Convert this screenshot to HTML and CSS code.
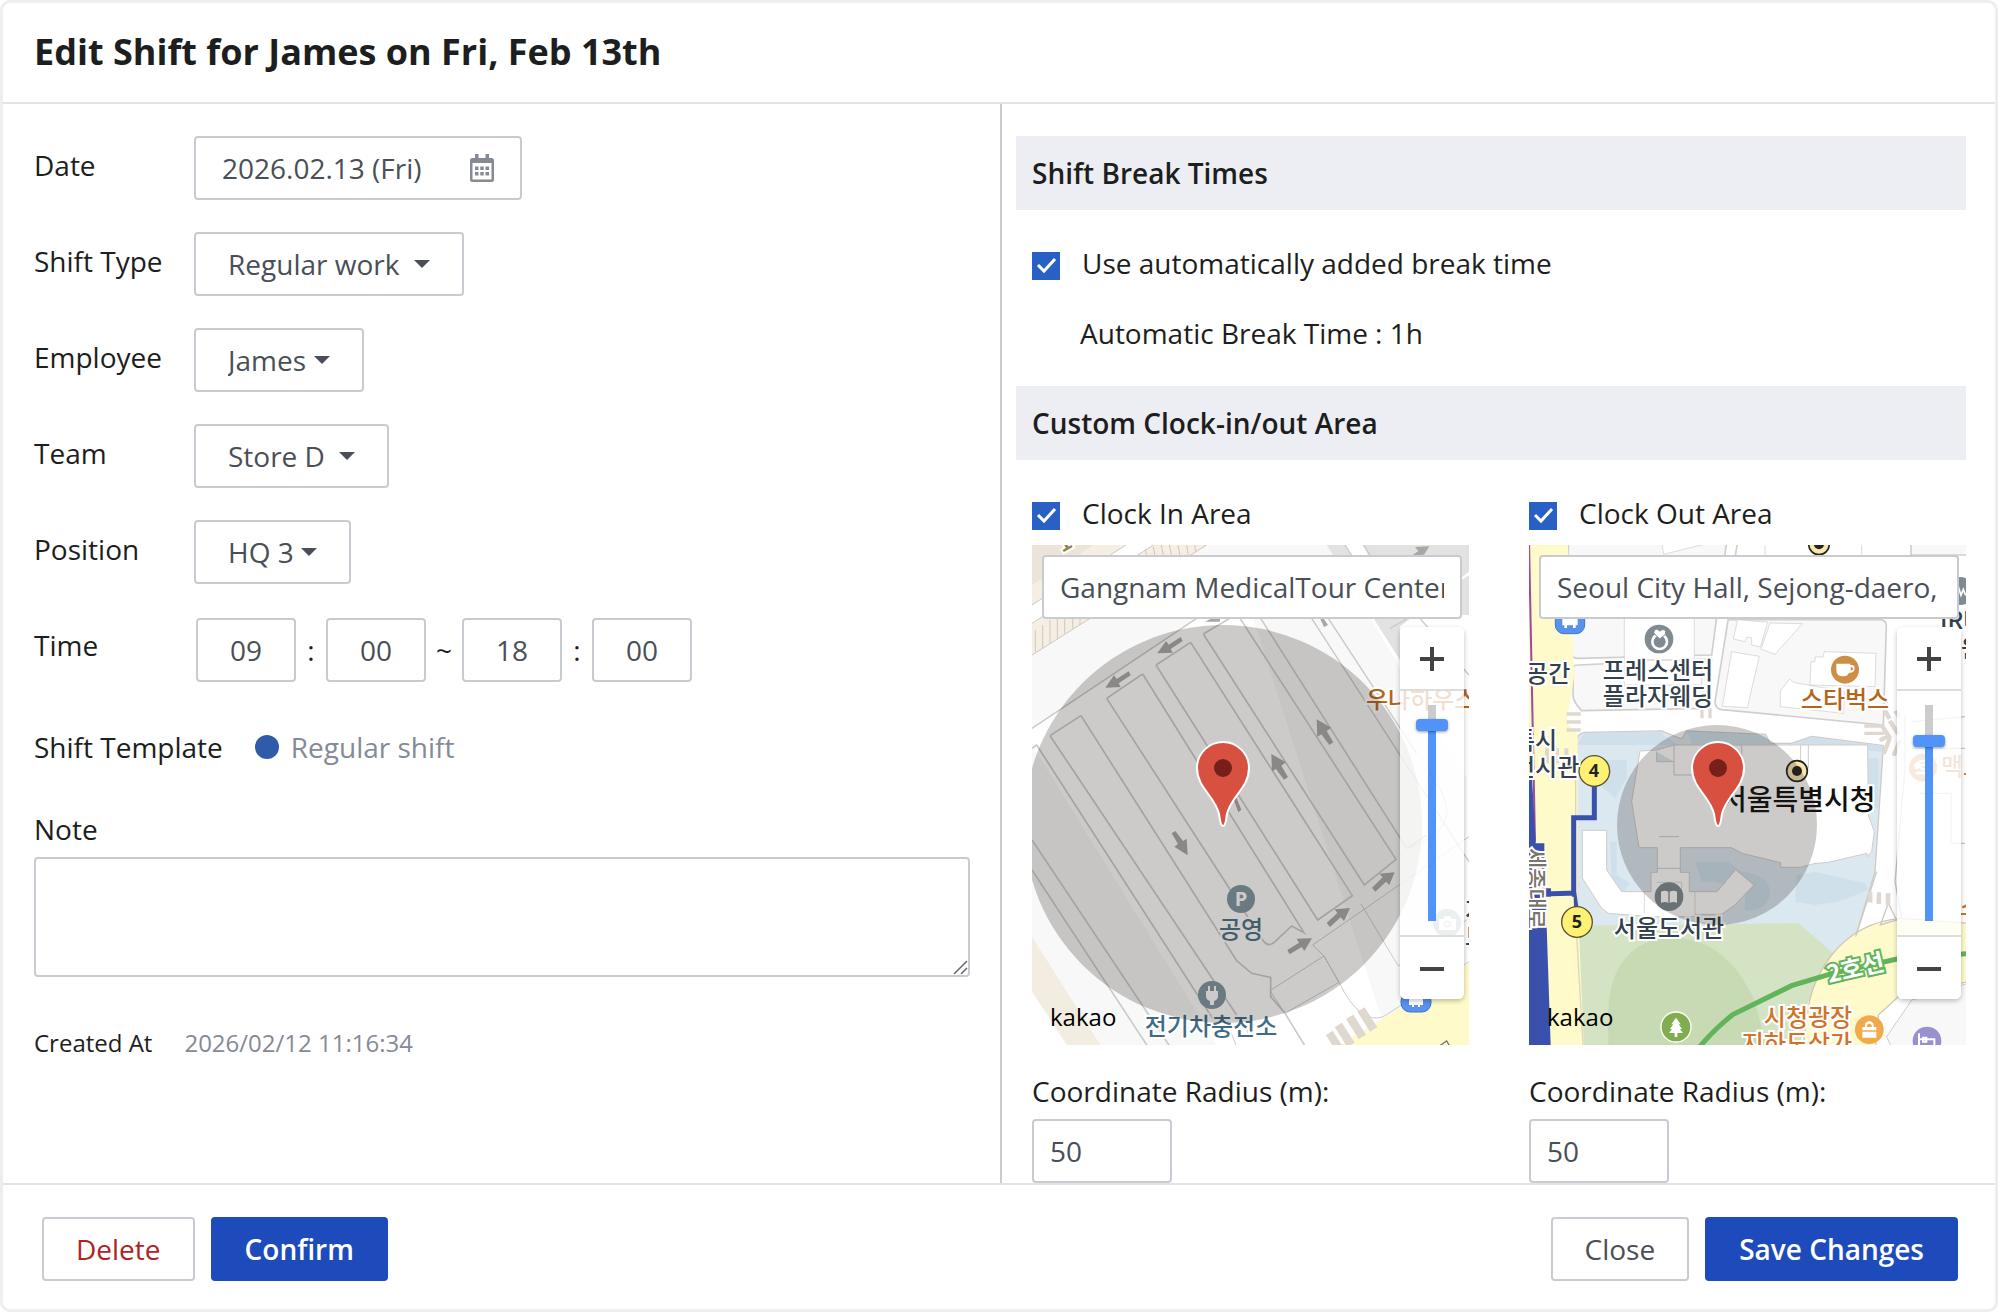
FILE: index.html
```html
<!DOCTYPE html>
<html lang="en">
<head>
<meta charset="utf-8">
<title>Edit Shift</title>
<link rel="stylesheet" href="styles.css">
</head>
<body>
<form class="dialog">
  <header class="dialog-header"><h1>Edit Shift for James on Fri, Feb 13th</h1></header>

  <div class="dialog-body">
    <section class="details">
      <div class="field">
        <label for="date">Date</label>
        <div class="date-box">
          <input id="date" type="text" value="2026.02.13 (Fri)">
          <svg class="calendar" viewBox="0 0 26 30" aria-hidden="true">
            <path fill="#858a96" fill-rule="evenodd" d="M6 1h3.500v4h7V1H20v4h2.500A2.500 2.500 0 0 1 25 7.500v19a2.500 2.500 0 0 1-2.500 2.500h-19A2.500 2.500 0 0 1 1 26.500v-19A2.500 2.500 0 0 1 3.500 5H6zM3.500 10v16.500h19V10z"/>
            <path fill="#858a96" d="M6 13.500h3.500V17H6zM11.250 13.500h3.500V17h-3.500zM16.500 13.500H20V17h-3.500zM6 19h3.500v3.500H6zM11.250 19h3.500v3.500h-3.500zM16.500 19H20v3.500h-3.500z"/>
          </svg>
        </div>
      </div>
      <div class="field">
        <label for="type">Shift Type</label>
        <select id="type" class="select"><option>Regular work</option></select>
      </div>
      <div class="field">
        <label for="employee">Employee</label>
        <select id="employee" class="select compact"><option>James</option></select>
      </div>
      <div class="field">
        <label for="team">Team</label>
        <select id="team" class="select"><option>Store D</option></select>
      </div>
      <div class="field">
        <label for="position">Position</label>
        <select id="position" class="select compact"><option>HQ 3</option></select>
      </div>
      <div class="field">
        <label for="start-hour">Time</label>
        <div class="times">
          <input id="start-hour" type="text" value="09" aria-label="Start hour"><span>:</span>
          <input type="text" value="00" aria-label="Start minute"><span class="tilde">~</span>
          <input type="text" value="18" aria-label="End hour"><span>:</span>
          <input type="text" value="00" aria-label="End minute">
        </div>
      </div>
      <div class="template"><span>Shift Template</span><span class="dot"></span><span class="muted">Regular shift</span></div>
      <label class="note-label" for="note">Note</label>
      <textarea id="note" class="note"></textarea>
      <div class="created"><span>Created At</span><span class="muted">2026/02/12 11:16:34</span></div>
    </section>

    <section class="settings">
      <h2>Shift Break Times</h2>
      <label class="check break-check"><input type="checkbox" checked><span>Use automatically added break time</span></label>
      <p class="auto-break">Automatic Break Time : 1h</p>
      <h2>Custom Clock-in/out Area</h2>

      <div class="areas">
        <div class="area">
          <label class="check"><input type="checkbox" checked><span>Clock In Area</span></label>
          <div class="map">
            <svg class="map-art" viewBox="0 0 437 500" preserveAspectRatio="xMidYMid slice" role="img" aria-label="Clock in map">
              <rect width="437" height="500" fill="#fff"/>
              <!-- ground, upper part -->
              <g transform="translate(-12 -10) scale(.33333)">
                <path fill="#f8f8f8" d="M36 360L560 30H920L1340 730V1500H1100L700 250H530L36 580zM36 630L820 1900H400L36 1300z"/>
                <path fill="#ece4d8" d="M36 30H318L36 210z"/>
                <path fill="#f5eee2" d="M220 30H318L36 210V150zM36 265L400 30H560L36 360z"/>
                <path fill="#e2e2e2" d="M920 30H975L1110 240H1347V30H1030L1347 30V120L1140 260V375z"/>
                <path fill="#e2e2e2" d="M1030 30H1347V110L1140 275z"/>
                <path fill="none" stroke="#cfc8bc" stroke-width="3" d="M36 210L318 30M36 265L400 30M36 360L560 30M46 350V285M68 340V270M90 325V255M112 312V250M134 295V250M158 280V250M180 270V250M380 62L376 42M405 62L400 35M430 62L424 30M455 62L448 30M480 62L474 30M505 62L500 30M528 50L524 30"/>
                <path fill="none" stroke="#c9c8c6" stroke-width="4" d="M36 580L530 250M875 250L1347 980M925 250L1190 655M975 30L1110 240M1030 30L1060 75M1110 280L1160 252M1200 250L1347 420"/>
                <g fill="none" stroke="#cdcbc9" stroke-width="5">
                  <path d="M90 602L183 542M260 490L368 417M408 390L512 322M550 297L630 250M36 640L50 630L610 1500M90 602L690 1500M183 542L650 1277L695 1315L752 1327V1385L795 1435L890 1590M368 417L852 1193L815 1173L765 1220Q745 1240 728 1215L260 490M408 390L893 1155L997 1082L512 322M550 297L1033 1050L1128 973L660 250M722 250L1160 940L1220 900M36 915L460 1550M36 1005L400 1560"/>
                </g>
                <g fill="none" stroke="#cdcbc9" stroke-width="3">
                  <path d="M878 1230L1347 905M1023 1107L1135 1293L1347 1150M878 1230L912 1263L957 1342Q1020 1470 1090 1445L1347 1280M750 1367L912 1263L957 1342L795 1435zM1165 940Q1290 890 1280 820T1210 700M36 1330L180 1550M620 1460L660 1560"/>
                </g>
                <path fill="#f3ece0" d="M36 1205L260 1560H160L36 1370z"/>
                <path fill="#fefac9" d="M1347 1285L1140 1420L950 1535V1560H1347z"/>
                <path fill="#dfd8cf" d="M1012 1430l22-13 38 60-22 13zM978 1452l22-13 38 60-22 13zM944 1476l22-13 38 60-22 13zM918 1500l20-13 38 60-22 13z"/>
                <path fill="none" stroke="#777" stroke-width="4" d="M1255 1535L1280 1518L1290 1535"/>
                <g fill="#a9a7a4">
                  <path d="M412 355L458 353L452 342L488 318L482 306L446 329L438 318z"/>
                  <path d="M256 458L302 456L296 445L332 421L326 409L290 432L282 421z"/>
                  <path d="M555 260L600 260L600 250H575zM900 250L912 276L924 270L910 250zM1228 34L1185 36L1195 48L1175 62H1205L1213 58z"/>
                  <path d="M890 553L892 605L904 598L928 630L940 622L920 588L934 578z"/>
                  <path d="M754 657L756 709L768 702L792 734L804 726L784 692L798 682z"/>
                  <path d="M638 785L655 832L664 824L650 790z"/>
                  <path d="M503 961L500 911L489 918L466 888L455 895L474 927L463 935z"/>
                  <path d="M1124 1012L1078 1016L1088 1027L1056 1058L1066 1070L1098 1040L1108 1050z"/>
                  <path d="M990 1119L944 1123L952 1134L920 1164L930 1176L962 1147L972 1158z"/>
                  <path d="M876 1210L830 1211L837 1223L802 1245L809 1258L845 1236L853 1248z"/>
                </g>
              </g>
              <g class="poi">
                <circle cx="209" cy="354" r="14" fill="#7f97a1"/>
                <text x="209" y="361" class="poi-letter">P</text>
                <text x="209" y="393" fill="#4c7084" text-anchor="middle">공영</text>
                <circle cx="180" cy="450" r="14" fill="#7f97a1"/>
                <path fill="#fff" d="M176 441h2v5h4v-5h2v5h2v5q0 4-4 5v4h-4v-4q-4-1-4-5v-5h2z"/>
                <text x="179" y="490" fill="#3f6c85" text-anchor="middle">전기차충전소</text>
                <text x="334" y="163" fill="#b5641b">우나하우스</text>
                <text x="433" y="374" fill="#33414d">지</text>
                <text x="433" y="400" fill="#33414d">드</text>
                <text x="30" y="8" fill="#94804e" transform="rotate(-30 30 8)">1가</text>
                <rect x="369" y="447" width="30" height="20" rx="9" fill="#5a91ea" stroke="#3674d9"/>
                <path fill="#fff" d="M377 450h14v10h-3v2h-2v-2h-4v2h-2v-2h-3z"/>
                <circle cx="415" cy="378" r="14" fill="#9fadb4"/>
                <path fill="#fff" d="M407 374h4l2-3h5l2 3h4v11h-17z"/>
                <circle cx="415" cy="379" r="3" fill="none" stroke="#9fadb4" stroke-width="1"/>
              </g>
              <circle cx="191" cy="279" r="199" fill="#231f18" fill-opacity=".23"/>
              <path class="pin" d="M191 281c-3 0-3-7-4-12-4-18-22-26-22-46a26 26 0 0 1 52 0c0 20-18 28-22 46-1 5-1 12-4 12z"/>
              <circle cx="191" cy="223" r="9" fill="#762019"/>
            </svg>
            <input class="map-search" type="text" value="Gangnam MedicalTour Center" aria-label="Clock in address">
            <span class="map-brand">kakao</span>
            <div class="zoom">
              <button type="button" aria-label="Zoom in"><svg viewBox="0 0 24 24"><path d="M12 0v24M0 12h24"/></svg></button>
              <div class="zoom-track"><input type="range" min="0" max="204" value="190" style="--level:196px" aria-label="Zoom level"></div>
              <button type="button" aria-label="Zoom out"><svg viewBox="0 0 24 24"><path d="M0 12h24"/></svg></button>
            </div>
          </div>
          <label class="radius-label" for="in-radius">Coordinate Radius (m):</label>
          <input class="radius" id="in-radius" type="text" value="50">
        </div>

        <div class="area">
          <label class="check"><input type="checkbox" checked><span>Clock Out Area</span></label>
          <div class="map">
            <svg class="map-art" viewBox="0 0 437 500" preserveAspectRatio="xMidYMid slice" role="img" aria-label="Clock out map">
              <rect width="437" height="500" fill="#fff"/>
              <g transform="translate(-14 -10) scale(.33333)">
                <!-- city blocks -->
                <g fill="#f8f8f8" stroke="#d2cecb" stroke-width="5">
                  <path d="M160 20V340Q165 370 190 370L590 360L635 20zM668 20L655 100L640 250L600 500Q600 520 620 524L1105 570L1114 270Q1112 254 1095 254H640M1188 20V60H1360V20zM175 395Q178 390 190 390L590 372L570 520L200 527Q174 500 174 480z"/>
                </g>
                <path fill="#fff" stroke="#ccc" stroke-width="2" d="M328 250H538V375H328zM328 375V450H560V375zM440 20L446 58L600 20zM668 254L758 262L736 336L710 330V308L695 306L690 320L655 312zM765 264L862 266L780 358L738 342zM650 350L733 364L697 518L622 514zM928 350L1083 355L1080 455L885 450L888 380H900V366H924zM824 432L835 442L988 470L986 535L796 515V468zM750 20H1040V62H750z"/>
                <!-- city hall grounds -->
                <path fill="#dce8f0" stroke="#cfcac6" stroke-width="4" d="M182 625Q185 595 210 592L440 588L500 612L515 588L752 598L765 625H830L890 604L1105 632L1080 1010L1022 1205L950 1260H190z"/>
                <path fill="#cfe0ea" d="M185 630L210 594L430 588L490 630zM515 590L750 600L765 628H530zM835 628L890 606L1105 632L1100 650zM1060 670H1090V820H1060zM255 675H335V730L300 790L255 750zM285 920H305V1020L345 1045L320 1080L290 1060zM540 980L640 980L680 1010Q770 1020 765 1080Q755 1130 690 1125V1070L600 1040H560zM845 1020L900 1010L1050 1045L1060 1065L970 1100L900 1110L840 1100z"/>
                <path fill="#fff" stroke="#d0ccc8" stroke-width="3" d="M375 648L425 645L477 630H878L1058 630L1060 840L1078 890L1070 950L1056 965V955L940 982L897 986L857 997H797V983L685 956L648 938H496V1012H523V1070H606L662 1004L717 1050L660 1110L620 1138H540V1145H408L280 1135L260 1120L202 1030V886H275V1005L320 1070H408V1012H427V938H372L350 800zM425 650V680H477M680 630V720H477V630M857 630V700M880 630V700M427 1000H496M432 905H492"/>
                <path fill="none" stroke="#cfcac6" stroke-width="2" d="M388 1070V1135M540 1070V1138M427 1042H500V1070"/>
                <!-- lawn -->
                <path fill="#d5e3c5" d="M190 1172L850 1164L955 1255L880 1400L850 1560H205z"/>
                <path fill="#c8dab3" d="M280 1560V1420Q290 1240 440 1208H490Q640 1220 720 1400L760 1560z"/>
                <path fill="#fefacb" stroke="#cfc8b8" stroke-width="4" d="M950 1260Q1030 1160 1160 1150L1360 1165V1340L1150 1385L1090 1440L1080 1560H860L880 1420Q890 1340 950 1260z"/>
                <path fill="#f8f8f8" stroke="#ccc" stroke-width="3" d="M1360 1345L1190 1395L1115 1505L1140 1560H1360z"/>
                <path fill="#fefac9" d="M42 20H158L178 420L155 560L188 600V1100L208 1560H42z"/>
                <path fill="none" stroke="#ddd6b8" stroke-width="4" d="M182 690V1150L206 1560"/>
                <path fill="none" stroke="#ccc8c5" stroke-width="4" d="M1085 1010L1022 1205M1170 540V700L1140 1040L1160 1150M1120 1105L1145 1155L1096 1170zM1190 640H1350M1212 775H1310M1308 775V925H1350M1190 560L1350 545"/>
                <g fill="#ded8d1">
                  <path d="M155 532h42v10h-42zM155 556h42v10h-42zM155 580h42v10h-42zM556 520h10v30h-10zM580 520h10v30h-10zM1048 568h60v10h-60zM1048 590h60v10h-60zM1060 1070h12v34l-14-2zM1086 1072h12v36l-14-2zM1112 1075h14v38l-14-2zM90 640h12v45H90zM120 640h12v45h-12zM148 640h12v45h-12z"/>
                  <path d="M1104 530l12-6 14 24-12 6zM1135 530l12-6 12 20-12 6zM1094 574l12-6 26 40-12 6zM1118 560l12-6 26 40-12 6zM1090 612l30-16 8 10-30 16zM1100 655l18-46 12 4-18 46zM1130 660l18-46 12 4-18 46z"/>
                </g>
                <!-- station outlines and exits -->
                <path fill="none" stroke="#9d4a9d" stroke-width="6" d="M42 20L60 920"/>
                <path fill="#3a50ad" d="M42 570L54 780L62 925H88V1060H108V1560H42z"/>
                <path fill="none" stroke="#3a50ad" stroke-width="15" d="M238 740V848H176V1070L183 1120M90 1077L182 1074"/>
                <path fill="#fefac9" d="M92 1085H176L190 1560H108z"/>
                <path fill="none" stroke="#60b45a" stroke-width="15" d="M550 1540Q600 1480 655 1438L830 1352L950 1316L1146 1272L1360 1256"/>
                <circle cx="238" cy="708" r="46" fill="#fff173" stroke="#5c5130" stroke-width="4"/>
                <circle cx="186" cy="1161" r="46" fill="#fff173" stroke="#5c5130" stroke-width="4"/>
                <circle cx="846" cy="708" r="31" fill="#fae6ad" stroke="#222" stroke-width="5"/><circle cx="846" cy="708" r="15" fill="#222"/>
                <circle cx="912" cy="28" r="31" fill="#fae6ad" stroke="#222" stroke-width="5"/><circle cx="912" cy="28" r="15" fill="#222"/>
                <!-- place icons -->
                <rect x="121" y="220" width="88" height="76" rx="26" fill="#5a91ea" stroke="#3674d9" stroke-width="3"/>
                <path fill="#fff" d="M142 235h46v36h-6v8h-8v-8h-18v8h-8v-8h-6z"/>
                <circle cx="432" cy="312" r="43" fill="#7f8a91"/>
                <circle cx="434" cy="320" r="22" fill="none" stroke="#fff" stroke-width="8"/><path fill="#fff" stroke="#7f8a91" stroke-width="3" d="M434 312l-18-18q0-12 10-12l8 6q20-12 18 10z"/>
                <circle cx="990" cy="404" r="42" fill="#cd8f45"/>
                <path fill="#fff" fill-rule="evenodd" d="M964 386h42v4q16-2 12 14-2 10-16 9-4 11-18 11-20 0-20-20zM1007 396v10q8 1 7-5 0-5-7-5"/>
                <circle cx="1335" cy="168" r="42" fill="#7f8a91"/><path stroke="#fff" stroke-width="5" fill="none" d="M1330 155l8 26 7-18 7 18"/>
                <circle cx="1224" cy="698" r="42" fill="#dd9560"/><path stroke="#fff" stroke-width="8" fill="none" d="M1202 690q22-24 40 0zM1200 700q12-8 20 0t24 0M1202 714h40"/>
                <circle cx="462" cy="1085" r="43" fill="#7f8a91"/>
                <path fill="#fff" d="M438 1070q12-6 22 0v34q-10-6-22 0zM464 1070q12-6 22 0v34q-10-6-22 0z"/>
                <circle cx="483" cy="1476" r="45" fill="#80ad4f" stroke="#fff" stroke-width="4"/>
                <path fill="#fff" d="M483 1448l14 20h-6l10 14h-6l9 12h-17v12h-8v-12h-17l9-12h-6l10-14h-6z"/>
                <circle cx="1063" cy="1484" r="43" fill="#f0aa4b"/>
                <path fill="#fff" fill-rule="evenodd" d="M1042 1476h8v-10q13-16 26 0v10h8v10h-42zM1056 1476h14v-6q-7-8-14 0zM1042 1490h42v18h-42z"/>
                <circle cx="1236" cy="1518" r="43" fill="#9990cf"/>
                <path fill="none" stroke="#fff" stroke-width="6" d="M1212 1495v50M1212 1535h46v-22h-46M1224 1508h10v12h-10z"/>
              </g>
              <g class="poi">
                <text x="-25" y="137" fill="#33414d">벽공간</text>
                <text x="129" y="134" fill="#33414d" text-anchor="middle">프레스센터</text>
                <text x="129" y="160" fill="#33414d" text-anchor="middle">플라자웨딩</text>
                <text x="316" y="163" fill="#b5641b" text-anchor="middle">스타벅스</text>
                <text x="-16" y="204" fill="#33414d">특시</text>
                <text x="-16" y="231" fill="#33414d">전시관</text>
                <text x="411" y="84" fill="#33414d">IR타</text>
                <text x="432" y="112" fill="#33414d">원</text>
                <text x="412" y="230" fill="#c97c4c">맥도</text>
                <text x="140" y="392" fill="#33414d" text-anchor="middle">서울도서관</text>
                <text x="279" y="481" fill="#d0742b" text-anchor="middle">시청광장</text>
                <text x="268" y="507" fill="#d0742b" text-anchor="middle">지하도상가</text>
                <text x="431" y="370" fill="#d0742b">스</text>
                <text x="0" y="0" class="road-name" transform="translate(-1 303) rotate(90)">세종대로</text>
                <text x="300" y="438" class="line-name" transform="rotate(-13 300 438)">2호선</text>
                <text x="65" y="232" class="exit">4</text>
                <text x="48" y="383" class="exit">5</text>
                <text x="192" y="265" class="city">서울특별시청</text>
              </g>
              <circle cx="188" cy="280" r="100" fill="#231f18" fill-opacity=".23"/>
              <path class="pin" d="M189 281c-3 0-3-7-4-12-4-18-22-26-22-46a26 26 0 0 1 52 0c0 20-18 28-22 46-1 5-1 12-4 12z"/>
              <circle cx="189" cy="223" r="9" fill="#762019"/>
            </svg>
            <input class="map-search" type="text" value="Seoul City Hall, Sejong-daero, Jung-gu" aria-label="Clock out address">
            <span class="map-brand">kakao</span>
            <div class="zoom">
              <button type="button" aria-label="Zoom in"><svg viewBox="0 0 24 24"><path d="M12 0v24M0 12h24"/></svg></button>
              <div class="zoom-track"><input type="range" min="0" max="204" value="174" style="--level:180px" aria-label="Zoom level"></div>
              <button type="button" aria-label="Zoom out"><svg viewBox="0 0 24 24"><path d="M0 12h24"/></svg></button>
            </div>
          </div>
          <label class="radius-label" for="out-radius">Coordinate Radius (m):</label>
          <input class="radius" id="out-radius" type="text" value="50">
        </div>
      </div>
    </section>
  </div>

  <footer class="dialog-footer">
    <button type="button" class="btn danger">Delete</button>
    <button type="button" class="btn primary">Confirm</button>
    <button type="button" class="btn push">Close</button>
    <button type="submit" class="btn primary">Save Changes</button>
  </footer>
</form>
</body>
</html>
```
FILE: styles.css
```css
* { box-sizing: border-box; }
body {
  margin: 0;
  background: #fff;
  color: #1d1e20;
  font: 28px/40px "Open Sans", "Noto Sans CJK KR", sans-serif;
}
input, select, textarea, button { font: inherit; color: #4a4f57; margin: 0; }
h1, h2, p { margin: 0; }

.dialog {
  min-height: 100vh;
  display: flex;
  flex-direction: column;
  border: 3px solid #eee;
  border-radius: 10px;
}
.dialog-header { padding: 25px 31px 26px; border-bottom: 2px solid #e2e3e8; }
h1 { font-size: 36px; line-height: 48px; font-weight: 700; }

.dialog-body { flex: 1; display: grid; grid-template-columns: 999px 1fr; }
.details { padding: 32px 30px 0 31px; border-right: 2px solid #c9cbd3; }
.settings { padding: 32px 29px 0 14px; }

.field { display: grid; grid-template-columns: 160px 1fr; height: 64px; margin-bottom: 32px; }
.field > label { padding-top: 9px; }
.date-box, .select, .times input, .radius, .map-search, .note {
  height: 64px;
  border: 2px solid #c9cbd3;
  border-radius: 4px;
  background: #fff;
}
.date-box { width: 328px; display: flex; align-items: center; padding: 0 25px 0 26px; }
.date-box input { flex: 1; width: 0; border: 0; padding: 0; background: none; }
.calendar { width: 26px; height: 30px; }
.select {
  justify-self: start;
  appearance: none;
  padding: 0 62px 0 32px;
  background: #fff url("data:image/svg+xml,%3Csvg xmlns='http://www.w3.org/2000/svg' width='16' height='8'%3E%3Cpath d='M0 0h16L8 8z' fill='%234a4f57'/%3E%3C/svg%3E") no-repeat right 32px top 26px;
}
.select.compact { padding-right: 55px; }
.times { display: flex; align-items: center; padding-left: 2px; height: 68px; }
.times input { width: 100px; text-align: center; padding: 0; }
.times span { width: 30px; text-align: center; }
.times .tilde { width: 36px; }

.template { display: flex; align-items: center; padding-top: 15px; }
.dot { width: 24px; height: 24px; border-radius: 50%; background: #305bab; margin: 0 12px 0 32px; }
.muted { color: #858a96; }
.note-label { display: block; padding-top: 42px; }
.note { display: block; width: 100%; height: 120px; margin-top: 8px; }
.note::-webkit-resizer {
  background: url("data:image/svg+xml,%3Csvg xmlns='http://www.w3.org/2000/svg' width='15' height='15'%3E%3Cpath d='M1 14L14 1M8 14l6-6' fill='none' stroke='%23666' stroke-width='1.500'/%3E%3C/svg%3E") no-repeat;
}
.created { display: flex; gap: 32px; font-size: 24px; margin-top: 46px; }

h2 { background: #edeef3; font-size: 28px; font-weight: 600; padding: 17px 16px; }
.check { display: flex; align-items: center; gap: 22px; padding-left: 16px; }
.check input {
  appearance: none;
  width: 28px;
  height: 28px;
  margin-top: 5px;
  background: #2860c4 url("data:image/svg+xml,%3Csvg xmlns='http://www.w3.org/2000/svg' width='28' height='28'%3E%3Cpath d='M6 13l6 6 11-12' fill='none' stroke='white' stroke-width='3'/%3E%3C/svg%3E");
}
.break-check { padding-top: 33px; }
.auto-break { padding: 30px 0 33px 64px; }
.areas { display: grid; grid-template-columns: 1fr 1fr; gap: 60px; padding: 33px 0 0 16px; }
.area .check { padding-left: 0; }

.map { position: relative; height: 500px; margin-top: 12px; overflow: hidden; }
.map-art { display: block; width: 100%; height: 100%; }
.map-search { position: absolute; top: 10px; left: 10px; width: calc(100% - 17px); padding: 0 16px; }
.map-brand { position: absolute; left: 18px; bottom: 8px; color: #000; font-size: 24px; }
.zoom {
  position: absolute;
  top: 82px;
  right: 5px;
  width: 64px;
  border-radius: 6px;
  overflow: hidden;
  background: rgba(255, 255, 255, .8);
  box-shadow: 0 2px 5px rgba(0, 0, 0, .25);
}
.zoom button { display: flex; align-items: center; justify-content: center; width: 64px; height: 62px; padding: 2px 0 0; border: 0; background: #fff; }
.zoom svg { width: 24px; height: 24px; fill: none; stroke: #434345; stroke-width: 4; }
.zoom-track { height: 248px; border: solid #ddd; border-width: 2px 0; display: flex; justify-content: center; padding: 14px 0; }
.zoom-track input {
  appearance: none;
  writing-mode: vertical-lr;
  direction: rtl;
  width: 32px;
  height: 216px;
  background: linear-gradient(to top, #5094fa var(--level), #ccc var(--level)) center / 8px 100% no-repeat;
}
.zoom-track input::-webkit-slider-thumb {
  appearance: none;
  width: 32px;
  height: 12px;
  border-radius: 4px;
  background: #5094fa;
  box-shadow: 0 1px 3px rgba(0, 0, 0, .4);
}
.poi text { font: 500 24px "Noto Sans CJK KR", sans-serif; paint-order: stroke; stroke: #fff; stroke-width: 4px; }
.poi .poi-letter { font: 700 20px "Open Sans", sans-serif; fill: #fff; text-anchor: middle; stroke: none; }
.poi .exit { font: 700 18px "Open Sans", sans-serif; fill: #222; text-anchor: middle; stroke: none; }
.poi .city { font-size: 28px; fill: #111; }
.poi .line-name { fill: #fff; stroke: #60b45a; font-weight: 700; }
.poi .road-name { fill: #78736b; font-size: 22px; }
.pin { fill: #d85140; stroke: #fff; stroke-width: 2; }

.radius-label { display: block; margin-top: 26px; }
.radius { display: block; width: 140px; margin-top: 8px; padding: 0 16px; }

.dialog-footer { display: flex; gap: 16px; border-top: 2px solid #e2e3e8; padding: 32px 37px 28px 39px; }
.btn { height: 64px; padding: 0 32px; border: 2px solid #c9cbd3; border-radius: 4px; background: #fff; }
.danger { color: #ae2424; }
.primary { background: #1e4bbb; border-color: #1e4bbb; color: #fff; font-weight: 600; }
.push { margin-left: auto; }
```
